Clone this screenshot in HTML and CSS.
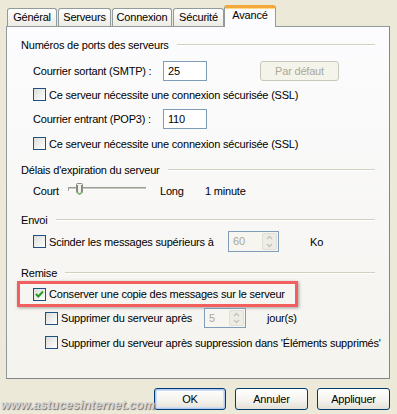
FILE: index.html
```html
<!DOCTYPE html>
<html lang="fr">
<head>
    <meta charset="UTF-8">
    <title>Propriétés du compte - Avancé</title>
    <link rel="stylesheet" href="styles.css">
</head>
<body>
    <div class="dialog">
        <div class="tabs">
            <div class="tab w-gen">Général</div>
            <div class="tab w-serv">Serveurs</div>
            <div class="tab w-conn">Connexion</div>
            <div class="tab w-sec">Sécurité</div>
            <div class="tab active w-av">Avancé</div>
        </div>

        <div class="panel">
            <!-- Ports -->
            <div class="group-title t-ports"><span>Numéros de ports des serveurs</span></div>
            <div class="row r-smtp">
                <span class="label">Courrier sortant (SMTP) :</span>
                <span class="field">25</span>
                <span class="btn-disabled">Par défaut</span>
            </div>
            <div class="row r-cb1">
                <span class="checkbox"></span>
                <span class="cb-text">Ce serveur nécessite une connexion sécurisée (SSL)</span>
            </div>
            <div class="row r-pop">
                <span class="label">Courrier entrant (POP3) :</span>
                <span class="field">110</span>
            </div>
            <div class="row r-cb2">
                <span class="checkbox"></span>
                <span class="cb-text">Ce serveur nécessite une connexion sécurisée (SSL)</span>
            </div>

            <!-- Délais -->
            <div class="group-title t-delay"><span>Délais d'expiration du serveur</span></div>
            <div class="row r-slider">
                <span class="s-court">Court</span>
                <svg class="slider" width="90" height="18" viewBox="0 0 90 18">
                    <line x1="7" y1="5.5" x2="84" y2="5.5" stroke="#9d9d98" stroke-width="1"/>
                    <line x1="7" y1="6.5" x2="84" y2="6.5" stroke="#c9c8be" stroke-width="1"/>
                    <line x1="7" y1="7.5" x2="84" y2="7.5" stroke="#ffffff" stroke-width="1"/>
                    <line x1="6.5" y1="5" x2="6.5" y2="9" stroke="#a3a3a0" stroke-width="1"/>
                    <path d="M14.5 2.5 Q14.5 1.5 15.5 1.5 L19.5 1.5 Q20.5 1.5 20.5 2.5 L20.5 10.5 L17.5 12.5 L14.5 10.5 Z" fill="#f3f3ee" stroke="#8d8d86" stroke-width="1"/>
                    <line x1="15.5" y1="3" x2="15.5" y2="10" stroke="#3bb53b" stroke-width="1"/>
                    <line x1="19.5" y1="3" x2="19.5" y2="10" stroke="#3bb53b" stroke-width="1"/>
                    <path d="M15.5 10.5 L17.5 11.7 L19.5 10.5" fill="none" stroke="#3bb53b" stroke-width="1"/>
                </svg>
                <span class="s-long">Long</span>
                <span>1 minute</span>
            </div>

            <!-- Envoi -->
            <div class="group-title t-envoi"><span>Envoi</span></div>
            <div class="row r-scind">
                <span class="checkbox"></span>
                <span class="cb-text w-scind">Scinder les messages supérieurs à</span>
                <span class="spin spin-ko">
                    <span class="spin-val">60</span>
                    <span class="spin-btns">
                        <svg width="13" height="17" viewBox="0 0 13 17">
                            <path d="M4 6 L6.5 3.5 L9 6" fill="none" stroke="#c3c2b8" stroke-width="1.3"/>
                            <path d="M4 11 L6.5 13.5 L9 11" fill="none" stroke="#c3c2b8" stroke-width="1.3"/>
                        </svg>
                    </span>
                </span>
                <span class="ko">Ko</span>
            </div>

            <!-- Remise -->
            <div class="group-title t-remise"><span>Remise</span></div>
            <div class="highlight">
                <span class="checkbox checked">
                    <svg width="11" height="11" viewBox="0 0 11 11">
                        <path d="M2 5 L4.3 7.5 L9 2.5" fill="none" stroke="#21a121" stroke-width="2"/>
                    </svg>
                </span>
                <span class="cb-text">Conserver une copie des messages sur le serveur</span>
            </div>
            <div class="row sub r-sub1">
                <span class="checkbox"></span>
                <span class="cb-text w-sub1">Supprimer du serveur après</span>
                <span class="spin spin-days">
                    <span class="spin-val">5</span>
                    <span class="spin-btns">
                        <svg width="13" height="16" viewBox="0 0 13 16">
                            <path d="M4 6 L6.5 3.5 L9 6" fill="none" stroke="#c3c2b8" stroke-width="1.3"/>
                            <path d="M4 10 L6.5 12.5 L9 10" fill="none" stroke="#c3c2b8" stroke-width="1.3"/>
                        </svg>
                    </span>
                </span>
                <span class="days">jour(s)</span>
            </div>
            <div class="row sub r-sub2">
                <span class="checkbox"></span>
                <span class="cb-text">Supprimer du serveur après suppression dans 'Éléments supprimés'</span>
            </div>
        </div>

        <div class="buttons">
            <span class="btn default">OK</span>
            <span class="btn">Annuler</span>
            <span class="btn">Appliquer</span>
        </div>
    </div>

    <div class="watermark">www.astucesinternet.com</div>
</body>
</html>
```

FILE: styles.css
```css
body {
    margin: 0;
    width: 397px;
    height: 414px;
    overflow: hidden;
    background-color: #ece9d8;
    font-family: 'Liberation Sans', Arial, sans-serif;
    font-size: 11px;
    letter-spacing: -0.2px;
    color: #000;
    position: relative;
}
.dialog {
    padding-left: 6px;
}

/* tabs */
.tabs {
    display: flex;
    align-items: flex-end;
    height: 21px;
    margin-top: 5px;
    padding-left: 1px;
    position: relative;
    z-index: 1;
}
.tab {
    box-sizing: border-box;
    height: 18px;
    border: 1px solid #919b9c;
    border-bottom: none;
    border-radius: 3px 3px 0 0;
    background: linear-gradient(#ffffff, #ecebe5);
    text-align: center;
    line-height: 17px;
    margin-right: 1px;
}
.tab.active {
    height: 22px;
    margin-bottom: -1px;
    margin-left: -1px;
    border-top: 3px solid #f5a83a;
    box-shadow: inset 0 1px 0 #ffd78a;
    background: #fcfcfe;
    line-height: 15px;
    border-radius: 3px 3px 0 0;
}
.w-gen { width: 50px; }
.w-serv { width: 53px; }
.w-conn { width: 60px; }
.w-sec { width: 51px; }
.w-av { width: 52px; }

/* panel */
.panel {
    box-sizing: border-box;
    width: 384px;
    height: 353px;
    border: 1px solid #919b9c;
    border-right-color: #7f8788;
    border-bottom-color: #7f8788;
    background: linear-gradient(#fcfcfe, #f4f3ee);
    padding: 0 14px;
    overflow: hidden;
}
.group-title {
    display: flex;
    align-items: center;
    height: 14px;
    line-height: 14px;
}
.group-title::after {
    content: "";
    flex: 1;
    height: 1px;
    margin-left: 8px;
    background-color: #d0d0bf;
    border-bottom: 1px solid #ffffff;
}
.t-ports { margin-top: 11px; }
.t-delay { margin-top: 11px; }
.t-envoi { margin-top: 13px; }
.t-remise { margin-top: 14px; }

.row {
    display: flex;
    align-items: center;
    padding-left: 12px;
}
.row.sub {
    padding-left: 24px;
}
.r-smtp { margin-top: 9px; height: 20px; }
.r-cb1 { margin-top: 5px; height: 17px; }
.r-pop { margin-top: 6px; height: 20px; }
.r-cb2 { margin-top: 6px; height: 17px; }
.r-slider { margin-top: 5px; height: 18px; }
.r-scind { margin-top: 4px; height: 21px; }
.r-sub1 { margin-top: 1px; height: 20px; }
.r-sub2 { margin-top: 6px; height: 17px; }

.label {
    width: 130px;
}
.field {
    box-sizing: border-box;
    width: 44px;
    height: 20px;
    border: 1px solid #7f9db9;
    background-color: #fff;
    padding-left: 4px;
    line-height: 18px;
}
.btn-disabled {
    box-sizing: border-box;
    width: 79px;
    height: 20px;
    margin-left: 53px;
    border: 1px solid #c9c7ba;
    border-radius: 3px;
    background-color: #f5f4ea;
    color: #aca899;
    text-align: center;
    line-height: 18px;
}

/* checkboxes */
.checkbox {
    box-sizing: border-box;
    width: 13px;
    height: 13px;
    flex-shrink: 0;
    border: 1px solid #1c5180;
    background: linear-gradient(135deg, #dcdcd7, #ffffff);
    display: flex;
    align-items: center;
    justify-content: center;
}
.cb-text {
    margin-left: 3px;
    white-space: nowrap;
}
.w-scind { width: 179px; }
.w-sub1 { width: 143px; }

/* slider */
.s-court { width: 29px; }
.slider { display: block; }
.s-long { width: 45px; margin-left: 8px; }

/* spinners */
.spin {
    box-sizing: border-box;
    display: flex;
    flex-shrink: 0;
    border: 1px solid #7f9db9;
    background-color: #f6f5ef;
    color: #aca899;
}
.spin-ko {
    width: 51px;
    height: 21px;
}
.spin-days {
    width: 42px;
    height: 20px;
}
.spin-val {
    flex: 1;
    padding-left: 4px;
    line-height: 18px;
}
.spin-btns {
    width: 15px;
    margin: 1px;
    border-radius: 2px;
    background-color: #eeede5;
    border: 1px solid #e0dfd6;
    box-sizing: border-box;
    display: flex;
    align-items: center;
    justify-content: center;
}
.ko { margin-left: 31px; }
.days { margin-left: 21px; }

/* annotation */
.highlight {
    box-sizing: border-box;
    display: flex;
    align-items: center;
    width: 281px;
    height: 26px;
    margin-top: 1px;
    margin-left: -4px;
    padding-left: 13px;
    border: 3px solid #f35e5e;
    box-shadow: 1px 1px 3px rgba(0, 0, 0, 0.35);
}

/* bottom buttons */
.buttons {
    display: flex;
    justify-content: flex-end;
    gap: 9px;
    width: 384px;
    margin-top: 9px;
}
.btn {
    box-sizing: border-box;
    width: 73px;
    height: 22px;
    border: 1px solid #003c74;
    border-radius: 3px;
    background: linear-gradient(#ffffff, #f3f2ec 60%, #e3e1d6);
    text-align: center;
    line-height: 20px;
}
.btn.default {
    width: 72px;
    box-shadow: inset 0 0 0 1px #b3c9ef, inset 0 0 0 2px #cedcf5;
}

.watermark {
    position: absolute;
    left: 1px;
    top: 398px;
    font-size: 12.5px;
    font-weight: bold;
    font-style: italic;
    color: #d6d6d6;
    text-shadow: 1px 1px 1px #6f6f6f;
    letter-spacing: 0;
}
```
